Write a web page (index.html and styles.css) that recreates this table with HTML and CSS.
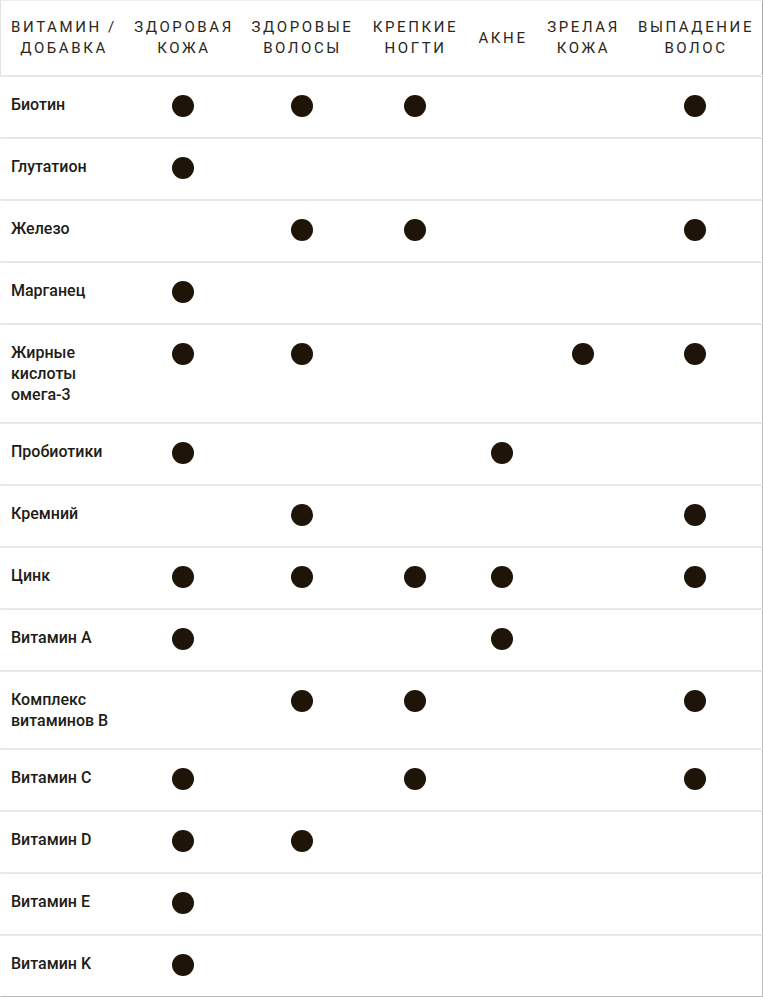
FILE: index.html
```html
<!DOCTYPE html>
<html lang="ru">
<head>
<meta charset="utf-8">
<title>Витамины</title>
<link rel="stylesheet" href="styles.css">
</head>
<body>
<div class="table">
  <div class="head">
    <div class="hcell">Витамин /<br>добавка</div>
    <div class="hcell">Здоровая<br>кожа</div>
    <div class="hcell">Здоровые<br>волосы</div>
    <div class="hcell">Крепкие<br>ногти</div>
    <div class="hcell">Акне</div>
    <div class="hcell">Зрелая<br>кожа</div>
    <div class="hcell">Выпадение<br>волос</div>
  </div>
  <div class="row"><div class="name">Биотин</div><div class="c"><span class="dot"></span></div><div class="c"><span class="dot"></span></div><div class="c"><span class="dot"></span></div><div class="c"></div><div class="c"></div><div class="c"><span class="dot"></span></div></div>
  <div class="row"><div class="name">Глутатион</div><div class="c"><span class="dot"></span></div><div class="c"></div><div class="c"></div><div class="c"></div><div class="c"></div><div class="c"></div></div>
  <div class="row"><div class="name">Железо</div><div class="c"></div><div class="c"><span class="dot"></span></div><div class="c"><span class="dot"></span></div><div class="c"></div><div class="c"></div><div class="c"><span class="dot"></span></div></div>
  <div class="row"><div class="name">Марганец</div><div class="c"><span class="dot"></span></div><div class="c"></div><div class="c"></div><div class="c"></div><div class="c"></div><div class="c"></div></div>
  <div class="row"><div class="name">Жирные кислоты омега-3</div><div class="c"><span class="dot"></span></div><div class="c"><span class="dot"></span></div><div class="c"></div><div class="c"></div><div class="c"><span class="dot"></span></div><div class="c"><span class="dot"></span></div></div>
  <div class="row"><div class="name">Пробиотики</div><div class="c"><span class="dot"></span></div><div class="c"></div><div class="c"></div><div class="c"><span class="dot"></span></div><div class="c"></div><div class="c"></div></div>
  <div class="row"><div class="name">Кремний</div><div class="c"></div><div class="c"><span class="dot"></span></div><div class="c"></div><div class="c"></div><div class="c"></div><div class="c"><span class="dot"></span></div></div>
  <div class="row"><div class="name">Цинк</div><div class="c"><span class="dot"></span></div><div class="c"><span class="dot"></span></div><div class="c"><span class="dot"></span></div><div class="c"><span class="dot"></span></div><div class="c"></div><div class="c"><span class="dot"></span></div></div>
  <div class="row"><div class="name">Витамин А</div><div class="c"><span class="dot"></span></div><div class="c"></div><div class="c"></div><div class="c"><span class="dot"></span></div><div class="c"></div><div class="c"></div></div>
  <div class="row"><div class="name">Комплекс витаминов В</div><div class="c"></div><div class="c"><span class="dot"></span></div><div class="c"><span class="dot"></span></div><div class="c"></div><div class="c"></div><div class="c"><span class="dot"></span></div></div>
  <div class="row"><div class="name">Витамин С</div><div class="c"><span class="dot"></span></div><div class="c"></div><div class="c"><span class="dot"></span></div><div class="c"></div><div class="c"></div><div class="c"><span class="dot"></span></div></div>
  <div class="row"><div class="name">Витамин D</div><div class="c"><span class="dot"></span></div><div class="c"><span class="dot"></span></div><div class="c"></div><div class="c"></div><div class="c"></div><div class="c"></div></div>
  <div class="row"><div class="name">Витамин E</div><div class="c"><span class="dot"></span></div><div class="c"></div><div class="c"></div><div class="c"></div><div class="c"></div><div class="c"></div></div>
  <div class="row"><div class="name">Витамин K</div><div class="c"><span class="dot"></span></div><div class="c"></div><div class="c"></div><div class="c"></div><div class="c"></div><div class="c"></div></div>
</div>
</body>
</html>
```

FILE: styles.css
```css
html, body {
  margin: 0;
  padding: 0;
  background: #fff;
}
body {
  font-family: Roboto, "Liberation Sans", sans-serif;
  color: #1f1a14;
}
.table {
  width: 763px;
}
.head, .row {
  display: grid;
  grid-template-columns: 124px 116px 121px 105px 70px 91px 134px;
  width: 763px;
  box-sizing: border-box;
}
.head {
  border-top: 1px solid #ececec;
  border-left: 1px solid #e2e2e2;
  border-right: 1px solid #a9a9a9;
  border-bottom: 1px solid #b3b3b3;
  height: 76px;
  align-items: center;
}
.hcell {
  text-align: center;
  text-transform: uppercase;
  font-size: 15px;
  font-weight: 400;
  letter-spacing: 2.6px;
  line-height: 21px;
  color: #2a2622;
  padding-left: 2px;
}
.row {
  border-top: 2px solid #e8e8e8;
  border-bottom: 1px solid #b9b9b9;
  border-left: 1px solid transparent;
  border-right: 1px solid #bcbcbc;
  margin-top: -1px;
}
.row:first-of-type {
  margin-top: 0;
}
.name {
  padding: 17px 0 17px 10px;
  font-size: 16px;
  font-weight: 500;
  line-height: 21px;
  color: #211c16;
}
.c {
  display: flex;
  justify-content: center;
  align-items: flex-start;
  padding: 18px 0 20px;
}
.dot {
  display: block;
  width: 22px;
  height: 22px;
  border-radius: 50%;
  background: #1e1408;
}
```
